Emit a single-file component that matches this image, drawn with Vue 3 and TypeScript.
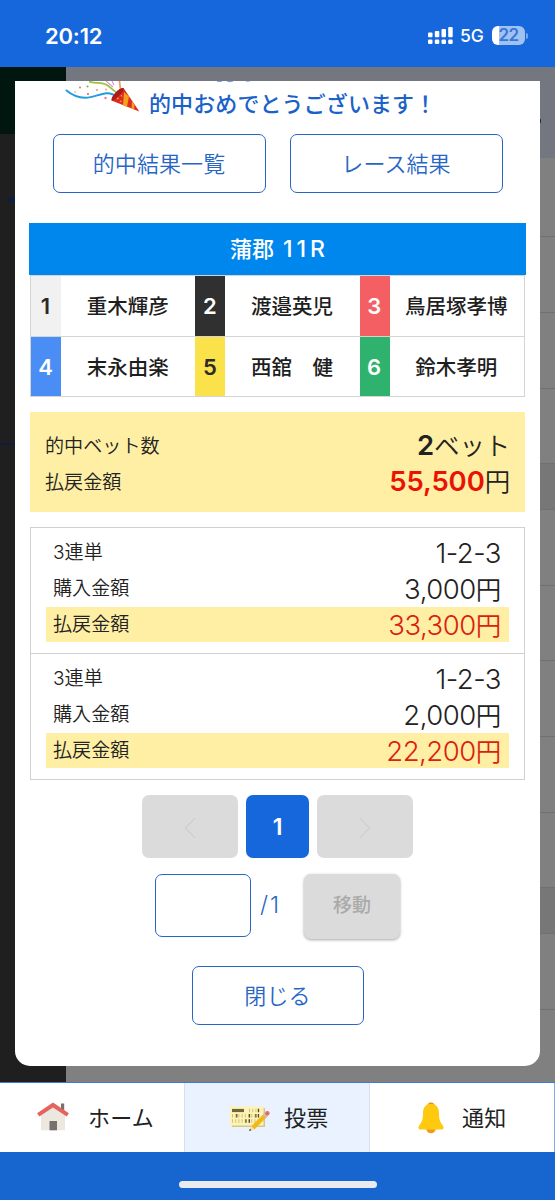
<script setup lang="ts">
interface Racer {
  no: number
  name: string
}

interface Bet {
  count: string
  kind: string
  combo: string
  stake: string
  payout: string
}

const racers: Racer[] = [
  { no: 1, name: '重木輝彦' },
  { no: 2, name: '渡邉英児' },
  { no: 3, name: '鳥居塚孝博' },
  { no: 4, name: '末永由楽' },
  { no: 5, name: '西舘　健' },
  { no: 6, name: '鈴木孝明' },
]

const bets: Bet[] = [
  { count: '3', kind: '連単', combo: '1-2-3', stake: '3,000', payout: '33,300' },
  { count: '3', kind: '連単', combo: '1-2-3', stake: '2,000', payout: '22,200' },
]

// Heights of the list rows behind the dialog; shaded ones are section headings.
const backRows = [
  { h: 79, shaded: false },
  { h: 76, shaded: false },
  { h: 76, shaded: false },
  { h: 75, shaded: false },
  { h: 46, shaded: true },
  { h: 76, shaded: false },
  { h: 75, shaded: false },
  { h: 76, shaded: false },
  { h: 76, shaded: false },
  { h: 75, shaded: false },
  { h: 46, shaded: true },
  { h: 76, shaded: false },
]
</script>

<template>
  <div class="screen">
    <header class="status">
      <span class="clock">20:12</span>
      <div class="status-right">
        <svg class="signal" width="26" height="19" viewBox="0 0 26 19">
          <g fill="#fff">
            <rect x="0" y="6.5" width="4.5" height="4.8" rx="1" />
            <rect x="6.8" y="5" width="4.5" height="6.3" rx="1" />
            <rect x="13.5" y="3" width="4.5" height="8.3" rx="1" />
            <rect x="20.2" y="1" width="4.5" height="10.3" rx="1" />
            <rect x="0" y="13.5" width="4.5" height="4.5" rx="1.3" />
            <rect x="6.8" y="13.5" width="4.5" height="4.5" rx="1.3" />
            <rect x="13.5" y="13.5" width="4.5" height="4.5" rx="1.3" />
            <rect x="20.2" y="13.5" width="4.5" height="4.5" rx="1.3" />
          </g>
        </svg>
        <span class="net">5G</span>
        <div class="battery"><span>22</span></div>
        <i class="battery-cap"></i>
      </div>
    </header>

    <main class="stage">
      <div class="backdrop">
        <div class="side">
          <div class="side-top"></div>
          <i class="side-mark"></i>
          <i class="side-line"></i>
        </div>
        <div class="list">
          <div class="list-head"></div>
          <div
            v-for="(row, i) in backRows"
            :key="i"
            class="list-row"
            :class="{ shaded: row.shaded }"
            :style="{ height: row.h + 'px' }"
          ></div>
        </div>
        <i class="back-dot"></i>
      </div>

      <section class="modal">
        <div class="congrats">
          <svg class="popper" width="80" height="34" viewBox="65 81 80 34" fill="none">
            <path d="M66.5 90.5C72 95 77 97.7 85 97.8C96 98 103 90.5 113 94.5" stroke="#1f9dde" stroke-width="2" stroke-linecap="round" />
            <path d="M89 81.6C97 84 100 81.8 106 84.5C111 87 112 90 116 92" stroke="#9ac53e" stroke-width="1.8" />
            <path d="M106 81L113 87M112 81L114 85" stroke="#d796d0" stroke-width="1.1" />
            <path d="M119.5 81L120.5 90" stroke="#f39a62" stroke-width="1.7" />
            <g>
              <circle cx="80" cy="87.5" r="1" fill="#df755b" />
              <circle cx="87.5" cy="86.5" r="1.1" fill="#77b84b" />
              <circle cx="75" cy="92" r=".8" fill="#e98aa0" />
              <circle cx="88" cy="94" r=".9" fill="#c34f56" />
              <circle cx="97" cy="90" r=".9" fill="#ef8d4c" />
              <circle cx="106" cy="89.5" r="1" fill="#f3aa5d" />
              <circle cx="105.5" cy="98" r="1.2" fill="#ef7890" />
            </g>
            <path d="M123.5 88L139.3 111.5L111.5 100.5C113 94 118 89 123.5 88Z" fill="#df2a20" />
            <path d="M124 92L129 96.5L127 107L123 105.3Z" fill="#f5a01c" />
            <path d="M132 101L134.5 105L134 109.5L131.5 108.5Z" fill="#f5a01c" />
            <path d="M123.5 88C120 87 110.5 96 111.5 100.5C114 101.5 125 91 123.5 88Z" fill="#a81d1b" />
            <path d="M117 98l1.5 1M121 95l1 1.5M120 101l1.5.5" stroke="#f7b634" stroke-width="1.2" />
          </svg>
          <svg class="cut-line" width="36" height="2" viewBox="0 0 36 2" fill="none" stroke="#7ba3dd" stroke-width="1.2">
            <path d="M0 0Q2.5 1 5 0M10 0Q13 1.2 16 0M29 .2L33 0" />
          </svg>
          <p>的中おめでとうございます！</p>
        </div>

        <div class="links">
          <button class="outline">的中結果一覧</button>
          <button class="outline">レース結果</button>
        </div>

        <h2 class="race">蒲郡 <span>11R</span></h2>
        <div class="racers">
          <div v-for="r in racers" :key="r.no" class="racer">
            <b :class="'n' + r.no">{{ r.no }}</b>
            <span>{{ r.name }}</span>
          </div>
        </div>

        <div class="summary">
          <div class="row">
            <span class="label">的中ベット数</span>
            <span class="value"><b>2</b><em>ベット</em></span>
          </div>
          <div class="row">
            <span class="label">払戻金額</span>
            <span class="value"><b class="red">55,500</b><em>円</em></span>
          </div>
        </div>

        <div class="bets">
          <div v-for="(bet, i) in bets" :key="i" class="bet">
            <div class="row">
              <span class="label"><span class="digit">{{ bet.count }}</span>{{ bet.kind }}</span>
              <span class="value">{{ bet.combo }}</span>
            </div>
            <div class="row">
              <span class="label">購入金額</span>
              <span class="value">{{ bet.stake }}<em>円</em></span>
            </div>
            <div class="row hit">
              <span class="label">払戻金額</span>
              <span class="value">{{ bet.payout }}<em>円</em></span>
            </div>
          </div>
        </div>

        <div class="pager">
          <button class="step" disabled>
            <svg width="12" height="22" viewBox="0 0 12 22"><path d="M11 1L1.5 11L11 21" /></svg>
          </button>
          <button class="current">1</button>
          <button class="step" disabled>
            <svg width="12" height="22" viewBox="0 0 12 22"><path d="M1 1L10.5 11L1 21" /></svg>
          </button>
        </div>

        <div class="jump">
          <input type="text" />
          <span>/1</span>
          <button disabled>移動</button>
        </div>

        <button class="outline close">閉じる</button>
      </section>
    </main>

    <nav class="tabs">
      <div class="tab">
        <svg class="home" width="32" height="30" viewBox="0 0 32 30">
          <rect x="24" y="1.5" width="3.2" height="10" fill="#77706d" />
          <path d="M4 12L16 3.5L28 12V28.3H4Z" fill="#ece8e0" />
          <path d="M1.2 12.8L16 3L30.8 12.8" fill="none" stroke="#e5625e" stroke-width="4" />
          <rect x="12.5" y="19" width="7.5" height="9.3" fill="#76716f" />
        </svg>
        <span>ホーム</span>
      </div>
      <div class="tab active">
        <svg class="ticket" width="41" height="28" viewBox="0 0 41 28">
          <path d="M3 4H36V23H3Z" fill="#d3c68a" />
          <path d="M1 2.5H34.5V21.5H1Z" fill="#fff3b4" />
          <path d="M3 6.5H15" stroke="#6d673d" stroke-width="3.2" />
          <path d="M20 6.5H31M3 11.8H31M3 17H31" stroke="#cfc07f" stroke-width="3.4" stroke-dasharray="1 2.2" />
          <path d="M29.4 4.7V8.3M7.8 10V13.6M20.5 10V13.6M26.9 10V13.6M17 15.2V18.8M20.4 15.2V18.8M29.5 10V13.6" stroke="#514b2d" stroke-width="1.2" />
          <path d="M23.8 24L36.8 11" stroke="#f2b719" stroke-width="4.5" />
          <path d="M35.5 12.3L37.6 10.2" stroke="#bfc2c9" stroke-width="4.5" />
          <circle cx="38.3" cy="9.3" r="2.2" fill="#ee6765" />
          <path d="M22.2 22.2L20 27L25.4 25.5Z" fill="#f7dfb2" />
          <path d="M21 24.8L20 27L22.4 26.2Z" fill="#37352f" />
        </svg>
        <span>投票</span>
      </div>
      <div class="tab">
        <svg class="bell" width="26" height="32" viewBox="0 0 26 32">
          <circle cx="13" cy="4.2" r="3.6" fill="#e58b0c" />
          <circle cx="13" cy="26.5" r="4.8" fill="#f19a17" />
          <path d="M13 1.8C7.7 1.8 5 6 5 11C5 18 3.8 20 1.2 23.5C-.4 26 .6 27.5 3 27.5H23C25.4 27.5 26.4 26 24.8 23.5C22.2 20 21 18 21 11C21 6 18.3 1.8 13 1.8Z" fill="#ffc910" />
        </svg>
        <span>通知</span>
      </div>
    </nav>
    <footer class="home-area"><i></i></footer>
  </div>
</template>

<style>
body {
  margin: 0;
}
</style>

<style scoped>
.screen {
  width: 555px;
  height: 1200px;
  display: flex;
  flex-direction: column;
  overflow: hidden;
  background: #1667dc;
  color: #222;
  font-family: "Noto Sans CJK JP", sans-serif;
  font-weight: 350;
}
* {
  box-sizing: border-box;
}
button,
input {
  font: inherit;
  padding: 0;
  margin: 0;
}
em {
  font-style: normal;
}

/* Status bar */
.status {
  height: 67px;
  flex: none;
  display: flex;
  justify-content: space-between;
  align-items: center;
  padding: 4px 27px 0 45px;
  color: #fff;
  font-family: Inter, sans-serif;
}
.clock {
  font-size: 22px;
  font-weight: 600;
  letter-spacing: -0.2px;
}
.status-right {
  display: flex;
  align-items: center;
}
.net {
  font-size: 17.5px;
  font-weight: 500;
  margin-left: 6px;
  width: 24px;
}
.battery {
  width: 33px;
  height: 18.5px;
  border-radius: 6px;
  margin-left: 8px;
  background: linear-gradient(90deg, #fff 7px, #a1c1f0 7px);
  color: #3777d9;
  font-size: 17px;
  font-weight: 600;
  line-height: 19px;
  letter-spacing: -0.6px;
  text-align: center;
}
.battery-cap {
  width: 2px;
  height: 6px;
  margin-left: 1px;
  border-radius: 0 3px 3px 0;
  background: #79a6ec;
}

/* Dimmed page behind the dialog */
.stage {
  position: relative;
  height: 1015px;
  flex: none;
  padding: 14px 15px 0;
}
.backdrop {
  position: absolute;
  inset: 0;
  display: flex;
}
.side {
  position: relative;
  width: 66px;
  background: #1f1f1f;
}
.side-top {
  height: 67px;
  background: #00160f;
}
.side-mark {
  position: absolute;
  left: 8px;
  top: 130px;
  width: 10px;
  height: 5px;
  background: #0b1e40;
}
.side-line {
  position: absolute;
  left: 0;
  top: 376px;
  width: 66px;
  height: 1.5px;
  background: #111c38;
}
.list {
  flex: 1;
  background: #808080;
}
.list-head {
  height: 91px;
  background: #74777f;
}
.list-row {
  border-bottom: 1px solid #707070;
}
.shaded {
  background: #777;
}
.back-dot {
  position: absolute;
  right: 14px;
  top: 52px;
  width: 1px;
  height: 4px;
  background: #122e61;
}

/* Dialog */
.modal {
  position: relative;
  width: 525px;
  height: 985px;
  overflow: hidden;
  background: #fff;
  border-radius: 0 0 15px 15px;
  padding: 0 15px;
}
.congrats {
  height: 53px;
}
.congrats p {
  margin: 0;
  padding: 4px 0 0 119px;
  font-size: 22px;
  letter-spacing: 0.1px;
  line-height: 34px;
  font-weight: 500;
  color: #1a62c9;
  white-space: nowrap;
}
.popper {
  position: absolute;
  left: 50px;
  top: 0;
}
.cut-line {
  position: absolute;
  left: 202px;
  top: 0;
}
.links {
  display: flex;
  gap: 24px;
  padding-left: 23px;
}
.outline {
  width: 213px;
  height: 59px;
  border: 1.5px solid #2866c5;
  border-radius: 7px;
  background: #fff;
  color: #2866c5;
  font-size: 22px;
  letter-spacing: 0.1px;
  padding: 0 1px 3px 0;
}
.race {
  width: 497px;
  height: 52px;
  margin: 30px 0 0 -1px;
  background: #0087ed;
  color: #fff;
  font-size: 22px;
  font-weight: 500;
  line-height: 49px;
  text-align: center;
}
.race span {
  margin-left: 4px;
  font-family: Inter, sans-serif;
  font-size: 23px;
  font-weight: 500;
  letter-spacing: 4px;
  margin-right: -4px;
}
.racers {
  display: grid;
  grid-template-columns: repeat(3, 1fr);
  gap: 1px 0;
  border: 1px solid #d4d4d4;
  background: #d4d4d4;
}
.racer {
  display: flex;
  height: 59.5px;
  background: #fff;
  font-weight: 500;
  line-height: 58px;
  text-align: center;
}
.racer b {
  width: 30px;
  font-family: Inter, sans-serif;
  font-weight: 600;
  font-size: 22px;
  line-height: 60px;
  padding-right: 1px;
  color: #fff;
}
.racer span {
  flex: 1;
  font-size: 20.5px;
  padding-right: 1px;
  color: #1e1e1e;
}
.racer .n1 {
  background: #f1f1f1;
  color: #2a2a2a;
}
.racer .n2 {
  background: #303030;
}
.racer .n3 {
  background: #f35f62;
}
.racer .n4 {
  background: #4a8ef5;
}
.racer .n5 {
  background: #fbe24a;
  color: #2a2a2a;
}
.racer .n6 {
  background: #2fb26d;
}

.row {
  display: flex;
  justify-content: space-between;
  align-items: center;
}
.label {
  font-size: 19.1px;
  padding-bottom: 3px;
}
.digit {
  font-family: Inter, sans-serif;
  font-weight: 300;
}
.value {
  display: flex;
  align-items: baseline;
  font-family: Inter, sans-serif;
  font-weight: 300;
  font-size: 27.5px;
  line-height: 34px;
  letter-spacing: -0.5px;
}
.value em {
  font-family: "Noto Sans CJK JP", sans-serif;
  font-weight: 350;
  font-size: 25.5px;
  letter-spacing: -0.2px;
}
.value b {
  font-weight: 600;
  letter-spacing: -0.1px;
}
.red {
  color: #ea1205;
}
.summary {
  height: 100px;
  margin: 15px 0 0;
  padding: 15px 15px 0 15px;
  background: #ffefa5;
}
.summary .row {
  height: 36px;
}
.summary .label {
  padding-bottom: 0;
}
.summary .value {
  padding-bottom: 2px;
}
.bets {
  margin-top: 15px;
  border: 1px solid #d0d0d0;
}
.bet {
  height: 125px;
  padding: 7px 15px 0;
}
.bet + .bet {
  border-top: 1px solid #d0d0d0;
  height: 126px;
}
.bet .row {
  height: 35px;
  margin-bottom: 1px;
  padding: 0 8px 0 7px;
}
.bet .hit {
  background: #ffefa5;
}
.hit .value {
  color: #dc2010;
}

.pager {
  display: flex;
  justify-content: center;
  gap: 8px;
  margin-top: 15px;
}
.pager button {
  height: 63px;
  border: 0;
  border-radius: 7px;
}
.step {
  width: 96px;
  background: #dbdbdb;
}
.step svg {
  vertical-align: middle;
}
.step path {
  fill: none;
  stroke: #cfcfcf;
  stroke-width: 1.3;
}
.pager .current {
  width: 63px;
  background: #1667dc;
  color: #fff;
  font-family: Inter, sans-serif;
  font-size: 23px;
  font-weight: 600;
}
.jump {
  display: flex;
  margin: 16px 0 0 125px;
}
.jump input {
  width: 96px;
  height: 63px;
  border: 1.5px solid #2866c5;
  border-radius: 7px;
  background: #fff;
}
.jump span {
  width: 53px;
  padding-left: 9px;
  line-height: 63px;
  font-family: Inter, sans-serif;
  font-weight: 300;
  font-size: 23px;
  letter-spacing: 2px;
  color: #2866c5;
}
.jump button {
  width: 96px;
  height: 65px;
  border: 0;
  border-radius: 7px;
  background: #dbdbdb;
  box-shadow: 0 1px 3px rgba(0, 0, 0, 0.35);
  color: #aaa;
  font-size: 19px;
  font-weight: 500;
  padding-bottom: 7px;
}
.close {
  display: block;
  width: 172px;
  margin: 27px 0 0 162px;
}

/* Bottom navigation */
.tabs {
  display: flex;
  height: 70px;
  flex: none;
  border-top: 1px solid #3d7bd3;
}
.tab {
  flex: 1;
  display: flex;
  align-items: center;
  background: #fff;
  font-size: 22px;
  font-weight: 400;
  letter-spacing: 0.2px;
  border-right: 1px solid #d6dfec;
}
.tab span {
  padding-bottom: 4px;
}
.active {
  background: #e9f2fe;
}
.tab:last-child {
  border-right-color: #7faae8;
}
.home {
  margin: 0 19px 2px 37px;
}
.ticket {
  margin: 0 14px 0 44px;
}
.bell {
  margin: 0 18px 0 48px;
}
.home-area {
  flex: 1;
  background: #1766cf;
}
.home-area i {
  display: block;
  width: 198px;
  height: 7px;
  margin: 29px auto 0;
  border-radius: 4px;
  background: #e9ebf0;
}
</style>
